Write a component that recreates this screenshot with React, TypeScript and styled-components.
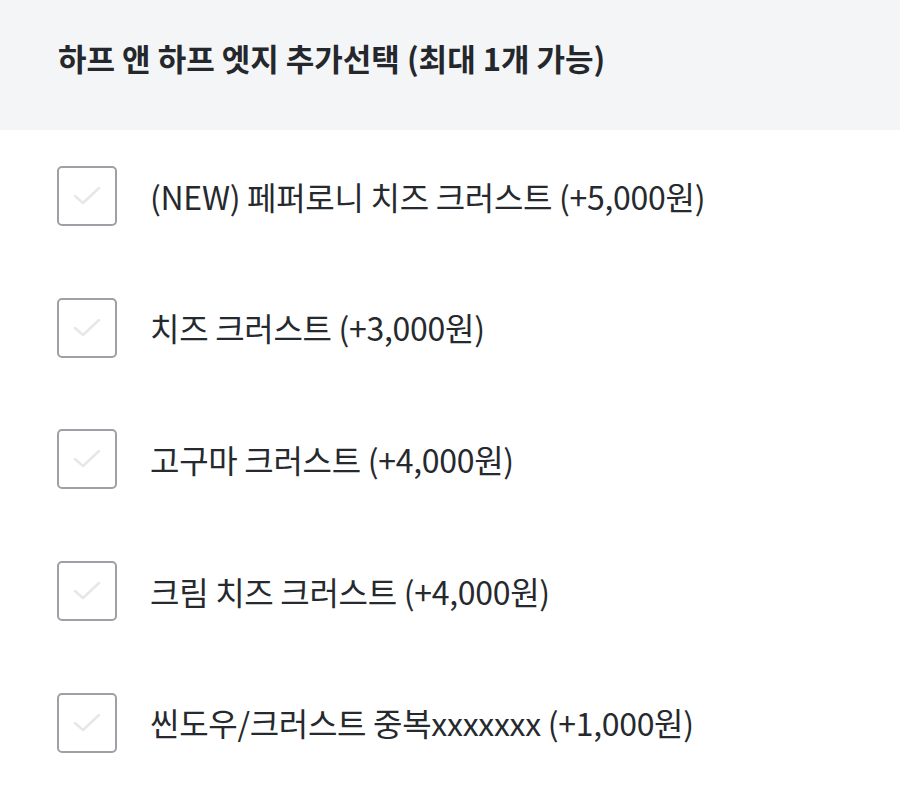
import React from "react";
import styled, { createGlobalStyle } from "styled-components";

const Global = createGlobalStyle`
  html, body { margin: 0; padding: 0; background: #ffffff; }
  body { font-family: "Noto Sans CJK KR", "Noto Sans", sans-serif; }
`;

const Page = styled.div`
  width: 900px;
  background: #ffffff;
`;

const Header = styled.div`
  height: 130px;
  background: #f4f5f7;
  display: flex;
  align-items: center;
  padding: 0 0 14px 58px;
  box-sizing: border-box;
`;

const Title = styled.h2`
  margin: 0;
  font-size: 31px;
  line-height: 1.2;
  font-weight: 700;
  color: #24272b;
  letter-spacing: 0;
`;

const List = styled.ul`
  list-style: none;
  margin: 0;
  padding: 0;
`;

const Row = styled.li`
  height: 131.7px;
  display: flex;
  align-items: center;
  padding-left: 57px;
  gap: 33px;
`;

const Box = styled.span`
  width: 60px;
  height: 60px;
  box-sizing: border-box;
  border: 2px solid #9da1a5;
  border-radius: 5px;
  display: flex;
  align-items: center;
  justify-content: center;
  flex-shrink: 0;
`;

const Label = styled.span`
  font-size: 32px;
  line-height: 1.2;
  color: #26292d;
  font-weight: 400;
  letter-spacing: -0.3px;
`;

const items = [
  "(NEW) 페퍼로니 치즈 크러스트 (+5,000원)",
  "치즈 크러스트 (+3,000원)",
  "고구마 크러스트 (+4,000원)",
  "크림 치즈 크러스트 (+4,000원)",
  "씬도우/크러스트 중복xxxxxxx (+1,000원)",
];

const Check = () => (
  <svg width="32" height="32" viewBox="0 0 32 32" fill="none">
    <path d="M4 16 L12 23 L28 8" stroke="#e6e7e9" strokeWidth="2.5" strokeLinecap="round" strokeLinejoin="round" />
  </svg>
);

export default function App() {
  return (
    <Page>
      <Global />
      <Header>
        <Title>하프 앤 하프 엣지 추가선택 (최대 1개 가능)</Title>
      </Header>
      <List>
        {items.map((t) => (
          <Row key={t}>
            <Box>
              <Check />
            </Box>
            <Label>{t}</Label>
          </Row>
        ))}
      </List>
    </Page>
  );
}
